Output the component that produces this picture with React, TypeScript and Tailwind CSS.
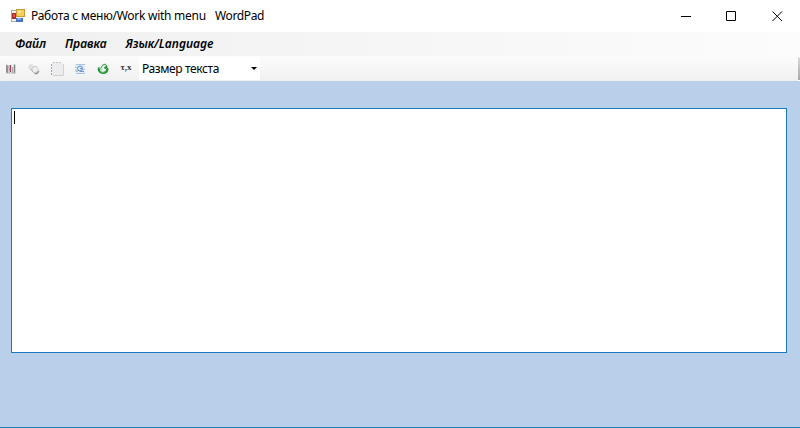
import React from "react";

function AppIcon() {
  return (
    <svg width="14" height="14" viewBox="0 0 14 14" className="shrink-0" shapeRendering="crispEdges">
      <rect x="0" y="1" width="13" height="12" fill="#f3f1ea" />
      <path d="M0 1.5H6M.5 1V13M0 12.5H5" stroke="#aaa9a5" fill="none" />
      <rect x="5" y="0" width="9" height="8" fill="#c99b36" />
      <rect x="6" y="1" width="7" height="6" fill="#f8cf55" />
      <rect x="7" y="2" width="3" height="2" fill="#ffe89b" />
      <rect x="1" y="4" width="4" height="6" fill="#a62e2c" />
      <rect x="2" y="5" width="2" height="3" fill="#d9534a" />
      <rect x="5" y="9" width="7" height="4" fill="#4773bd" />
      <rect x="6" y="9" width="4" height="2" fill="#7fa8e4" />
    </svg>
  );
}

const icon = "h-4 w-4 shrink-0";

function CutIcon() {
  return (
    <svg viewBox="0 0 16 16" className={icon}>
      <path d="M3 4h2v8H3z" fill="#8f8d92" />
      <path d="M5 4h2v8H5z" fill="#d7cfd3" />
      <path d="M4 3.5l4 8" stroke="#c9a3ad" />
      <path d="M7.5 4v7" stroke="#a0405a" strokeWidth="1.3" />
      <path d="M9.500 6v6" stroke="#aaa" strokeWidth="1.200" />
      <path d="M11.500 3.500v9" stroke="#83868b" strokeWidth="1.600" />
      <path d="M3 12h9" stroke="#b9b5ba" />
    </svg>
  );
}

function CopyIcon() {
  return (
    <svg viewBox="0 0 16 16" className={icon}>
      <path d="M3 4.500l3-1 3 3-3 3-3-2z" fill="#e4e4e4" stroke="#d4d4d4" strokeWidth=".7" />
      <path d="M6 7l4-2 2.500 3.500-3 3.500-3-1z" fill="#efefef" stroke="#c0c0c0" strokeWidth=".8" />
      <path d="M8.500 12.500l2.500 0 2-2.500" fill="none" stroke="#929292" strokeWidth="1.300" />
      <path d="M4.500 8l2.500 3" stroke="#b8b8b8" />
    </svg>
  );
}

function SelectIcon() {
  return (
    <svg viewBox="0 0 16 16" className={icon}>
      <rect x="3" y="2" width="11" height="12" fill="#ececef" />
      <path d="M4 1.500h8" stroke="#c2c2c6" strokeDasharray="2 1" />
      <path d="M14.500 3v11.500H4" fill="none" stroke="#cfcfd5" />
      <path d="M2.500 3v11" stroke="#a3a3a6" strokeDasharray="2 1" />
    </svg>
  );
}

function FindIcon() {
  return (
    <svg viewBox="0 0 16 16" className={icon}>
      <rect x="3" y="3" width="10" height="9" fill="#e4edf7" />
      <path d="M4 3.500h9M3 6.500h2M11 8.500h2M3 9.500h2M4 12.500h9" stroke="#a9c3e0" />
      <circle cx="8" cy="7.500" r="2.500" fill="#d9e8f9" stroke="#6292c5" />
      <path d="M6 9.500l-1.500 1.500M8 7.500h3M8 10.500h4" stroke="#7299c4" />
    </svg>
  );
}

function RefreshIcon() {
  return (
    <svg viewBox="0 0 16 16" className={icon}>
      <path d="M4 6.500c-.8 3 1 5.500 4 5.500 3 0 5-2.500 4.200-5" fill="none" stroke="#24923a" strokeWidth="2.200" />
      <path d="M4 6l3 3" stroke="#8bd492" strokeWidth="1.500" />
      <path d="M6.500 7c0-2.500 2-4 4.500-3.500" fill="none" stroke="#4da65b" strokeWidth="1.100" />
      <path d="M9 6.500l3-3 .5 3-2.500 2z" fill="#2c9441" />
      <path d="M5 10c1.500 2 4.500 1.500 5.500 0" fill="none" stroke="#62c66c" />
    </svg>
  );
}

export default function App() {
  return (
    <div className="flex h-[428px] w-[800px] flex-col overflow-hidden border-b border-[#1f7fc8] bg-[#b9cfea] font-['Noto_Sans','Open_Sans',sans-serif] text-[12px] text-black">
      <header className="flex h-8 shrink-0 items-center justify-between bg-white pl-[11px]">
        <div className="flex h-8 items-center">
          <AppIcon />
          <h1 className="ml-1.5 flex whitespace-pre leading-4">
            <span className="w-[184px] tracking-[-0.27px]">Работа с меню/Work with menu</span>
            <span className="tracking-[-0.38px]">WordPad</span>
          </h1>
        </div>
        <div className="flex h-8 items-center">
          <button aria-label="Minimize" className="flex h-[30px] w-[45px] items-center justify-center">
            <svg width="11" height="11" viewBox="0 0 11 11"><path d="M0 5.500h10" stroke="#000" /></svg>
          </button>
          <button aria-label="Maximize" className="flex h-[30px] w-[45px] items-center justify-center">
            <svg width="11" height="11" viewBox="0 0 11 11"><path d="M.5.500h9v9h-9z" fill="none" stroke="#000" /></svg>
          </button>
          <button aria-label="Close" className="flex h-[30px] w-[46px] items-center justify-center">
            <svg width="11" height="11" viewBox="0 0 11 11"><path d="M.5.500l9.500 9.500M10 .5L.5 10" stroke="#000" /></svg>
          </button>
        </div>
      </header>
      <nav className="flex h-6 shrink-0 items-center bg-linear-to-r from-[#f0f0f0] to-[#fcfcfc] pl-[15px] font-semibold italic leading-4">
        <span className="w-[50px]">Файл</span>
        <span className="w-[60.5px]">Правка</span>
        <span className="tracking-[-0.03px]">Язык/Language</span>
      </nav>
      <div className="flex h-[25px] shrink-0 bg-white">
        <div className="flex h-[25px] w-[798px] items-center rounded-l-[2px] bg-linear-to-b from-[#fcfcfc] to-[#f0f0f0] pl-[3px]">
          <div className="flex gap-[7px]">
            <CutIcon />
            <CopyIcon />
            <SelectIcon />
            <FindIcon />
            <RefreshIcon />
            <span className="h-4 w-4 text-center font-['Liberation_Serif',serif] text-[9px] font-bold leading-[13px] text-[#333]">τ,x</span>
          </div>
          <div className="ml-[5px] flex h-[23px] w-[121px] items-center justify-between bg-white pl-[3px] pr-[3px]">
            <span className="leading-4 tracking-[-0.4px]">Размер текста</span>
            <svg width="6" height="4" viewBox="0 0 6 4"><path d="M0 0h6L3 3z" fill="#000" /></svg>
          </div>
        </div>
        <div className="my-px w-0.5 rounded-tr-[2px] bg-linear-to-b from-[#d8d8d8] to-[#a8a8a8]" />
      </div>
      <main className="flex-1 pl-[11px] pt-[27px]">
        <div className="h-[245px] w-[776px] border border-[#1979bd] bg-white pl-[2px] pt-[2px]">
          <div className="h-[13px] w-px bg-black" />
        </div>
      </main>
    </div>
  );
}
